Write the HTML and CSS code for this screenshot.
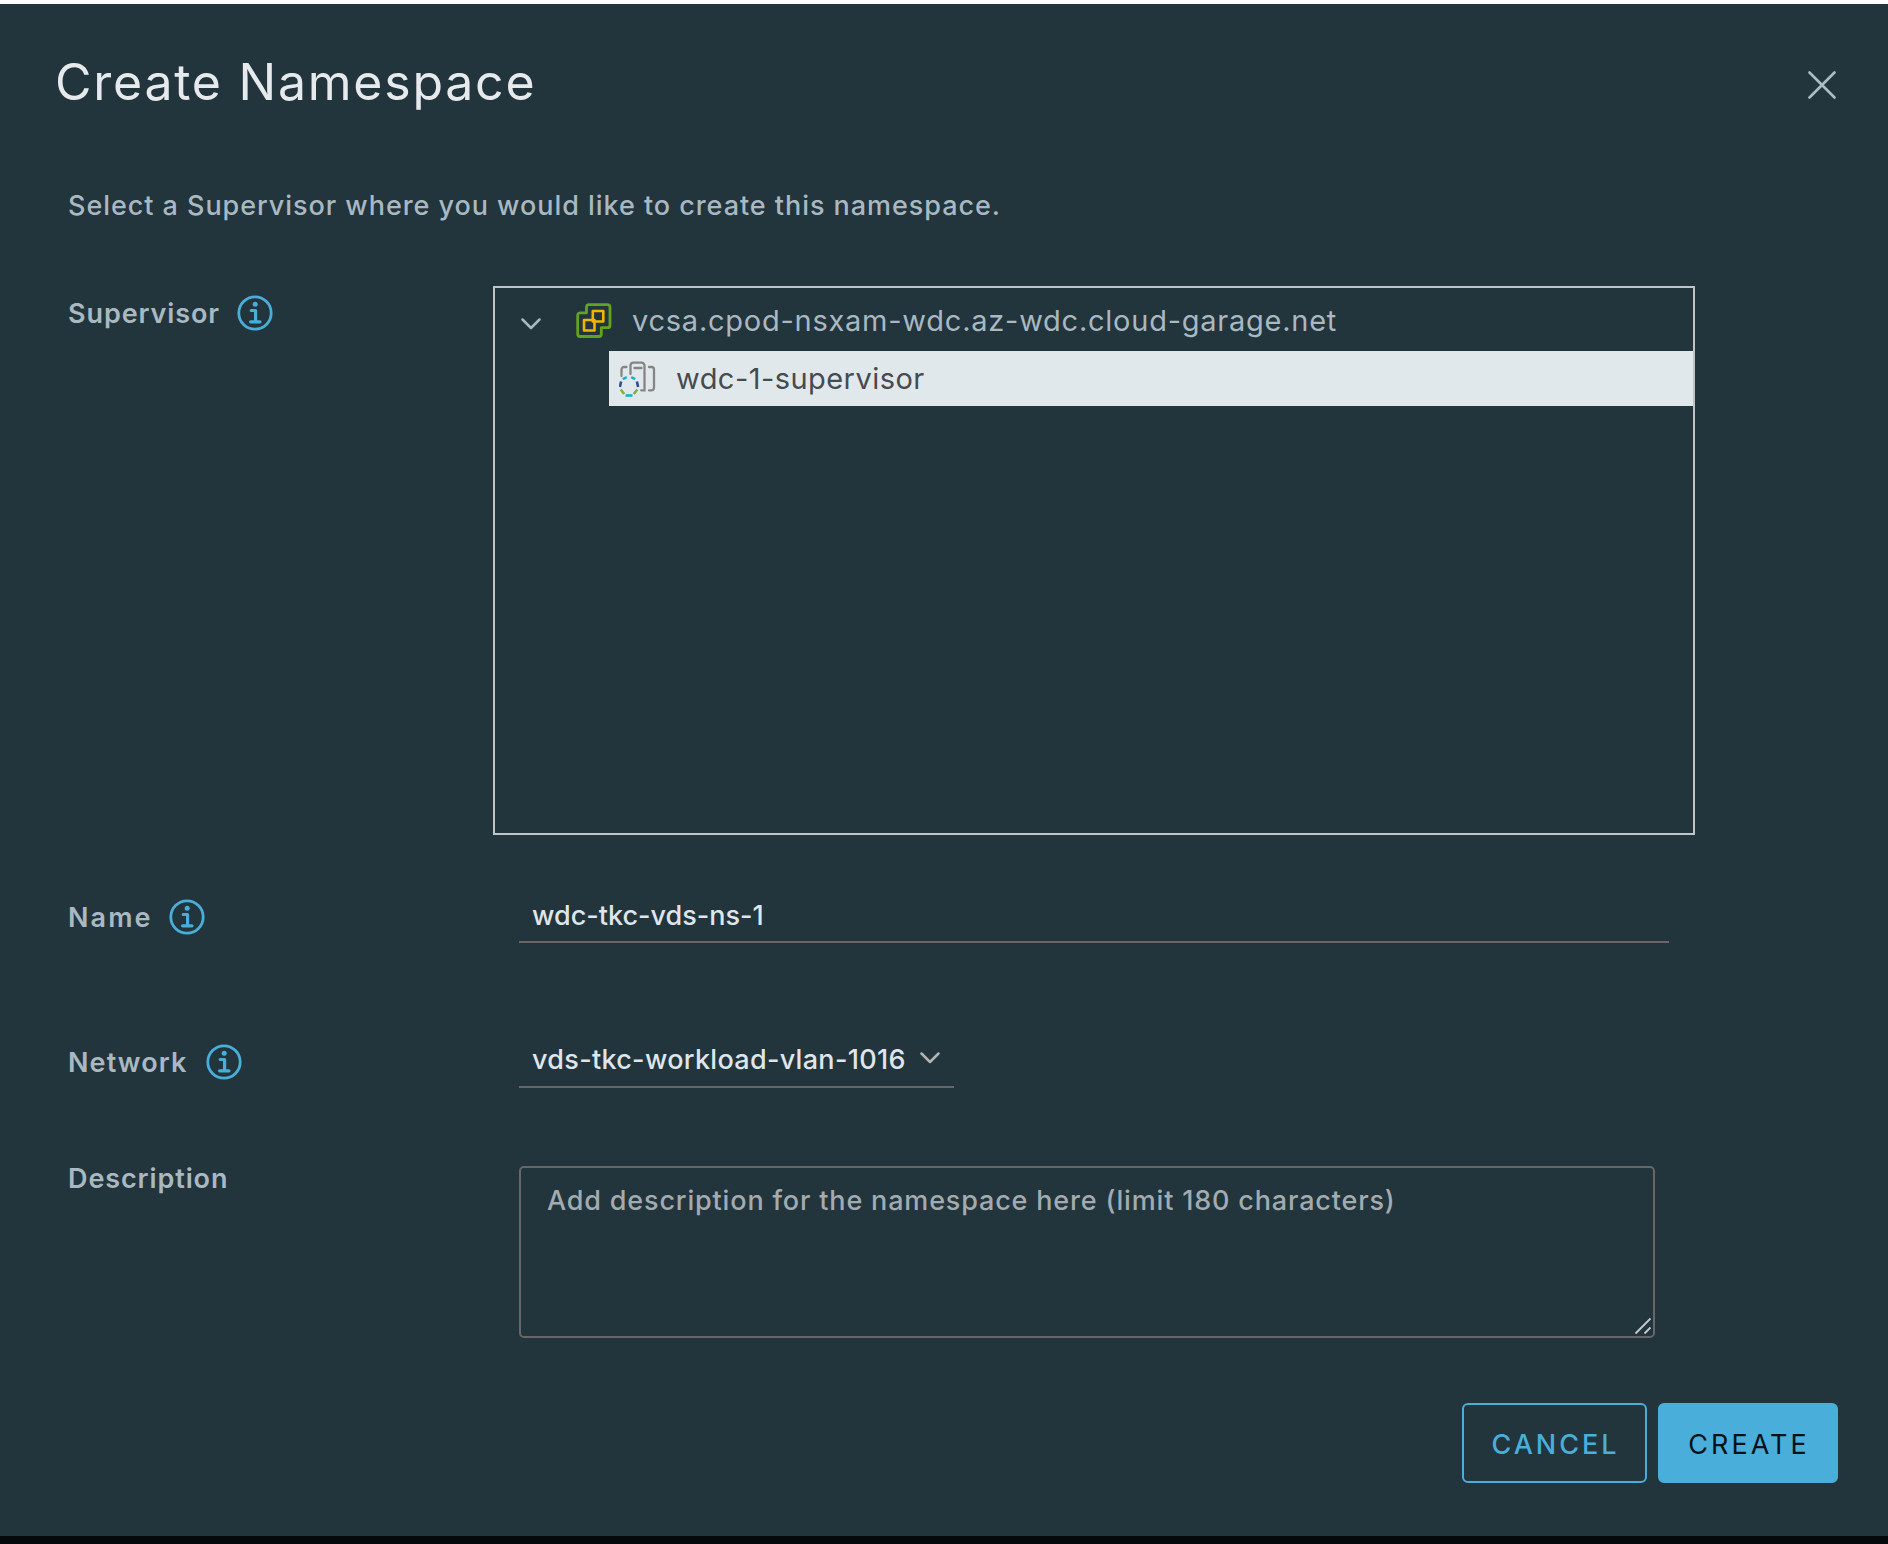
FILE: index.html
```html
<!DOCTYPE html>
<html lang="en">
<head>
<meta charset="utf-8">
<title>Create Namespace</title>
<link rel="stylesheet" href="styles.css">
</head>
<body>
<svg class="sprite" aria-hidden="true">
  <symbol id="info" viewBox="0 0 36 36">
    <circle cx="18" cy="18" r="16.2" fill="none" stroke="currentColor" stroke-width="2.8"/>
    <circle cx="18.200" cy="9.300" r="2.500" fill="currentColor"/>
    <path d="M14.200 15.500h4.400v11M13.600 26.800h9.400" fill="none" stroke="currentColor" stroke-width="3.200" stroke-linecap="round" stroke-linejoin="round"/>
  </symbol>
  <symbol id="chevron" viewBox="0 0 20 12">
    <path d="M1.500 1.500L10 10l8.500-8.500" fill="none" stroke="currentColor" stroke-width="2.500" stroke-linecap="round" stroke-linejoin="round"/>
  </symbol>
</svg>
<main class="dialog">
  <header class="header">
    <h1 class="title">Create Namespace</h1>
    <button class="close" aria-label="Close">
      <svg width="28" height="28" viewBox="0 0 28 28"><path d="M1.500 1.500l25 25M26.500 1.500l-25 25" stroke="currentColor" stroke-width="2.600" stroke-linecap="round"/></svg>
    </button>
  </header>
  <p class="intro">Select a Supervisor where you would like to create this namespace.</p>
  <form class="form">
    <div class="row row-supervisor">
      <div class="label"><span>Supervisor</span><svg class="info"><use href="#info"/></svg></div>
      <div class="tree">
        <div class="node">
          <svg class="caret"><use href="#chevron"/></svg>
          <svg class="vcenter" width="36" height="36" viewBox="0 0 36 36" fill="none" stroke-linejoin="round">
            <path d="M13 1.700h18.500a2.500 2.500 0 0 1 2.500 2.500v18a2.500 2.500 0 0 1-2.500 2.500h-6.200v6.300a2.500 2.500 0 0 1-2.500 2.500H4.200a2.500 2.500 0 0 1-2.500-2.500V12.300a2.500 2.500 0 0 1 2.500-2.500h6.300V4.200A2.500 2.500 0 0 1 13 1.700z" stroke="#62a420" stroke-width="2.800"/>
            <path d="M16.800 8h10.500v10.500H16.800zM8 17h10.500v10.500H8z" stroke="#efb500" stroke-width="2.600"/>
          </svg>
          <span class="host">vcsa.cpod-nsxam-wdc.az-wdc.cloud-garage.net</span>
        </div>
        <div class="node node-selected">
          <svg class="supervisor" width="38" height="38" viewBox="0 0 38 38" fill="none" stroke-linecap="round">
            <g stroke="#858585" stroke-width="2.300">
              <path d="M7.500 6H5a2.500 2.500 0 0 0-2.500 2.500V15"/>
              <path d="M11.500 13V4.500A3 3 0 0 1 14.500 1.700h8a3 3 0 0 1 3 3v24.600h-3.300M15.500 7h7"/>
              <path d="M30 6h2.500a2.500 2.500 0 0 1 2.500 2.500v18.300a2.500 2.500 0 0 1-2.500 2.500H30"/>
            </g>
            <g stroke-width="2.600" stroke-linecap="butt">
              <path d="M3.800 18.200l4-2M12.200 16.200l4 2" stroke="#1bb3c4"/>
              <path d="M.9 26l1.200-5.500M19.100 26l-1.200-5.500" stroke="#2c4d9c"/>
              <path d="M1.700 28.500l3.500 4.500M18.300 28.500l-3.500 4.500" stroke="#7ab53a"/>
              <path d="M6.500 34.500h7" stroke="#1bb3c4"/>
            </g>
          </svg>
          <span class="cluster">wdc-1-supervisor</span>
        </div>
      </div>
    </div>
    <div class="row row-name">
      <label class="label" for="name"><span class="label-name">Name</span><svg class="info"><use href="#info"/></svg></label>
      <input class="field field-name" id="name" type="text" value="wdc-tkc-vds-ns-1">
    </div>
    <div class="row row-network">
      <div class="label"><span class="label-network">Network</span><svg class="info"><use href="#info"/></svg></div>
      <div class="field select"><span>vds-tkc-workload-vlan-1016</span><svg class="caret"><use href="#chevron"/></svg></div>
    </div>
    <div class="row row-description">
      <label class="label" for="desc"><span>Description</span></label>
      <div class="area">
        <textarea id="desc" class="textarea" placeholder="Add description for the namespace here (limit 180 characters)"></textarea>
        <svg class="grip" width="18" height="18" viewBox="0 0 18 18"><path d="M1.500 16.500l15-15M10.500 16.500l6-6" stroke="#c4c9cb" stroke-width="1.800"/></svg>
      </div>
    </div>
  </form>
  <footer class="footer">
    <button class="btn btn-outline">CANCEL</button>
    <button class="btn btn-primary">CREATE</button>
  </footer>
</main>
</body>
</html>
```
FILE: styles.css
```css
* { box-sizing: border-box; }

body {
  margin: 0;
  height: 1544px;
  padding-top: 4px;
  background: linear-gradient(#fff 4px, #05090b 4px);
  font: 500 27px/36px Inter, "Noto Sans", sans-serif;
  letter-spacing: 0.95px;
  color: #a9b8c1;
  overflow: hidden;
}

button, input, textarea { font: inherit; letter-spacing: inherit; }

.sprite { position: absolute; width: 0; height: 0; }

.dialog {
  height: 1532px;
  padding: 48px 50px 0 55px;
  background: #22343c;
}

.header {
  display: flex;
  justify-content: space-between;
  height: 136px;
}

.title {
  margin: 0;
  font-size: 50px;
  line-height: 60px;
  font-weight: 400;
  letter-spacing: 1.75px;
  color: #e6eaed;
}

.close {
  width: 28px;
  height: 28px;
  margin: 19px 2px 0 0;
  padding: 0;
  border: 0;
  background: none;
  color: #adbbc4;
}
.close svg { display: block; }

.intro { margin: 0 0 62px 13px; }

.form { margin-left: 13px; }

.row {
  display: grid;
  grid-template-columns: 451px 1fr;
  align-items: start;
}
.row-supervisor { grid-template-columns: 425px 1202px; height: 604px; }
.row-name { height: 145px; }
.row-network { height: 131px; }
.row-description { height: 237px; }

.label {
  display: flex;
  align-items: center;
  gap: 17px;
  margin-top: 10px;
  font-weight: 600;
  letter-spacing: 0.9px;
}
.row-description .label { margin-top: -5px; }
.label-name { margin-right: -1px; letter-spacing: 2.1px; }
.label-network { margin-right: 2px; letter-spacing: 1.1px; }

.info {
  width: 36px;
  height: 36px;
  margin-top: -2px;
  color: #49afd9;
}
.row-supervisor .info { margin-top: -3px; }

.caret { width: 20px; height: 12px; flex: none; }

.tree {
  height: 549px;
  border: 2px solid #bfc4c7;
}

.node {
  display: flex;
  align-items: center;
  height: 63px;
  padding-left: 26px;
  font-size: 29px;
  font-weight: 400;
  letter-spacing: 0.75px;
}
.node .caret { margin-top: 9px; }
.vcenter { margin: 3px 0 0 35px; }
.host { margin: 3px 0 0 20px; }

.node-selected {
  height: 55px;
  margin-left: 114px;
  padding-left: 10px;
  gap: 19px;
  background: #e1e8ec;
  color: #454b4f;
  letter-spacing: 0.45px;
}
.supervisor { margin-top: 3px; }

.field {
  height: 53px;
  padding: 4px 13px 5px;
  border: 0;
  border-bottom: 2px solid #676767;
  background: none;
  color: #dfe5ea;
  outline: 0;
}
.field-name { width: 1150px; letter-spacing: 0; }
.select {
  display: flex;
  align-items: center;
  justify-content: space-between;
  width: 435px;
  padding-right: 14px;
  letter-spacing: 0.3px;
}
.select .caret { margin-top: -4px; color: #b3b3b3; }

.area { position: relative; width: 1136px; height: 172px; }
.textarea {
  display: block;
  width: 100%;
  height: 100%;
  padding: 15px 26px;
  border: 2px solid #676767;
  border-radius: 5px;
  background: none;
  color: #dfe5ea;
  letter-spacing: 0.83px;
  resize: none;
}
.textarea::placeholder { color: #a2abb0; opacity: 1; }
.grip { position: absolute; right: 3px; bottom: 3px; }

.footer {
  display: flex;
  justify-content: flex-end;
  gap: 11px;
}

.btn {
  height: 80px;
  padding: 4px 0 0 2px;
  border: 2px solid #49afd9;
  border-radius: 6px;
  letter-spacing: 3px;
}
.btn-outline { width: 185px; background: none; color: #49afd9; }
.btn-primary { width: 180px; background: #4aaedb; color: #061217; font-weight: 400; }
```
